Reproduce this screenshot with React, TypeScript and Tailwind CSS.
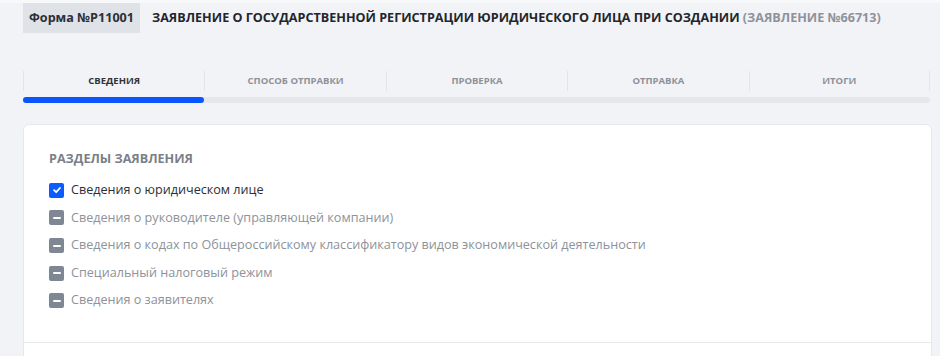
const tabs = ["Сведения", "Способ отправки", "Проверка", "Отправка", "Итоги"];

const sections = [
  { label: "Сведения о юридическом лице", checked: true },
  { label: "Сведения о руководителе (управляющей компании)", checked: false },
  { label: "Сведения о кодах по Общероссийскому классификатору видов экономической деятельности", checked: false },
  { label: "Специальный налоговый режим", checked: false },
  { label: "Сведения о заявителях", checked: false },
];

const Checkbox: React.FC<{ checked: boolean }> = ({ checked }) =>
  checked ? (
    <span className="flex size-[15px] shrink-0 items-center justify-center rounded-[2px] bg-[#0a5cff]">
      <svg viewBox="0 0 12 12" className="size-[10px]" fill="none" stroke="white" strokeWidth="2.2" strokeLinecap="round" strokeLinejoin="round">
        <path d="M2.5 6.2 L5 8.6 L9.6 3.6" />
      </svg>
    </span>
  ) : (
    <span className="flex size-[15px] shrink-0 items-center justify-center rounded-[2px] bg-[#7f8794]">
      <span className="h-[2px] w-[8px] rounded-[1px] bg-white" />
    </span>
  );

export default function App() {
  return (
    <div className="h-[356px] w-[940px] overflow-hidden bg-[#f2f3f7] font-['Open_Sans',sans-serif]">
      <div className="h-[3px] bg-[#f7f8fa]" />
      <div className="flex items-center px-[23px]">
        <div className="flex h-[30px] w-[117px] items-center justify-center bg-[#dfe2e7] text-[12.6px] font-bold text-[#2b2f36]">
          Форма №P11001
        </div>
        <div className="ml-3 text-[12.6px] font-bold uppercase text-[#22262c]">
          Заявление о государственной регистрации юридического лица при создании{" "}
          <span className="text-[#8d929b]">(Заявление №66713)</span>
        </div>
      </div>

      <div className="mx-[23px] mt-[38px] w-[907px]">
        <div className="grid grid-cols-5">
          {tabs.map((t, i) => (
            <div
              key={t}
              className={`flex h-[20px] items-center justify-center border-l border-[#e2e4e9] text-[9.5px] font-bold uppercase ${
                i === 4 ? "border-r" : ""
              } ${i === 0 ? "text-[#2f333a]" : "text-[#8d9199]"}`}
            >
              {t}
            </div>
          ))}
        </div>
        <div className="mt-[6px] h-[6px] w-[907px] rounded-full bg-[#e5e7eb]">
          <div className="h-full w-[181px] rounded-full bg-[#0a55ff]" />
        </div>
      </div>

      <div className="mx-[23px] mt-[21px] w-[909px] rounded-[6px] border border-[#e6e8ec] bg-white">
        <div className="px-[25px] pb-[32px] pt-[25px]">
          <div className="text-[12.6px] font-bold uppercase text-[#7a7f88]">Разделы заявления</div>
          <div className="mt-[12px] flex flex-col gap-[8.6px]">
            {sections.map((s) => (
              <div key={s.label} className="flex h-[19px] items-center gap-[7px]">
                <Checkbox checked={s.checked} />
                <span className={`text-[12.6px] ${s.checked ? "text-[#2b2f36]" : "text-[#8d929b]"}`}>{s.label}</span>
              </div>
            ))}
          </div>
        </div>
        <div className="h-[40px] border-t border-[#e6e8ec]" />
      </div>
    </div>
  );
}
